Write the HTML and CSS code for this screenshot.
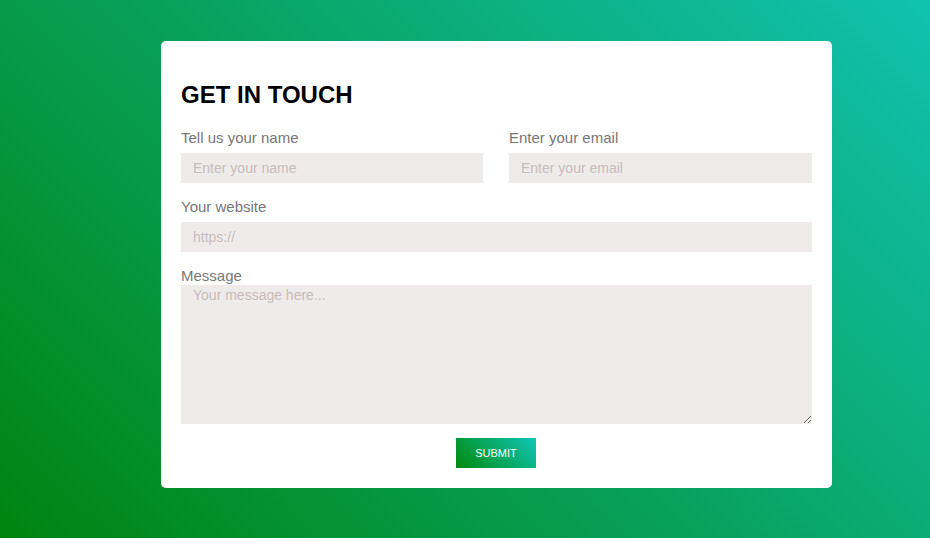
FILE: index.html
```html
<!DOCTYPE html>
<html lang="en">
<head>
<meta charset="utf-8">
<title>Get in touch</title>
<link rel="stylesheet" href="styles.css">
</head>
<body>
<main class="page">
  <form class="card">
    <h2 class="title">GET IN TOUCH</h2>
    <div class="row">
      <div class="field">
        <label class="label" for="name">Tell us your name</label>
        <input class="input" id="name" type="text" placeholder="Enter your name">
      </div>
      <div class="field">
        <label class="label" for="email">Enter your email</label>
        <input class="input" id="email" type="email" placeholder="Enter your email">
      </div>
    </div>
    <div class="field">
      <label class="label" for="site">Your website</label>
      <input class="input" id="site" type="text" placeholder="https://">
    </div>
    <div class="field field-msg">
      <label class="label label-tight" for="msg">Message</label>
      <textarea class="input textarea" id="msg" placeholder="Your message here..."></textarea>
    </div>
    <div class="actions">
      <button class="submit" type="button">SUBMIT</button>
    </div>
  </form>
</main>
</body>
</html>
```
FILE: styles.css
```css
* { box-sizing: border-box; }
html, body { margin: 0; padding: 0; }
body {
  width: 930px;
  height: 538px;
  overflow: hidden;
  font-family: "Liberation Sans", Arial, sans-serif;
  background: linear-gradient(45deg, #008410 0%, #11c2b0 100%);
}
.page {
  display: flex;
  justify-content: center;
  padding-top: 41px;
}
.card {
  width: 671px;
  background: #fff;
  border-radius: 5px;
  padding: 20px;
  display: flex;
  flex-direction: column;
  margin-left: 63px;
}
.title {
  margin: 20px 0 20px;
  font-size: 24px;
  line-height: 28px;
  font-weight: bold;
  color: #000;
}
.row {
  display: grid;
  grid-template-columns: 302px 303px;
  column-gap: 26px;
}
.field {
  display: flex;
  flex-direction: column;
  margin-bottom: 15px;
}
.field-msg { margin-bottom: 14px; }
.label {
  font-size: 15px;
  line-height: 18px;
  color: #777;
  margin-bottom: 6px;
}
.label-tight { margin-bottom: 0; }
.input {
  height: 30px;
  border: none;
  outline: none;
  background: #f0ebeb;
  padding: 0 12px;
  font-family: "Liberation Sans", Arial, sans-serif;
  font-size: 14px;
  color: #555;
}
.input::placeholder { color: #c5bcbc; }
.textarea {
  height: 139px;
  padding: 2px 12px;
  resize: vertical;
  font-size: 14px;
}
.actions {
  display: flex;
  justify-content: center;
  padding-right: 1px;
}
.submit {
  width: 80px;
  height: 30px;
  border: none;
  background: linear-gradient(45deg, #008a0c, #10c6b8);
  color: #fff;
  font-family: "Liberation Sans", Arial, sans-serif;
  font-size: 11px;
  cursor: pointer;
  padding: 0;
}
```
